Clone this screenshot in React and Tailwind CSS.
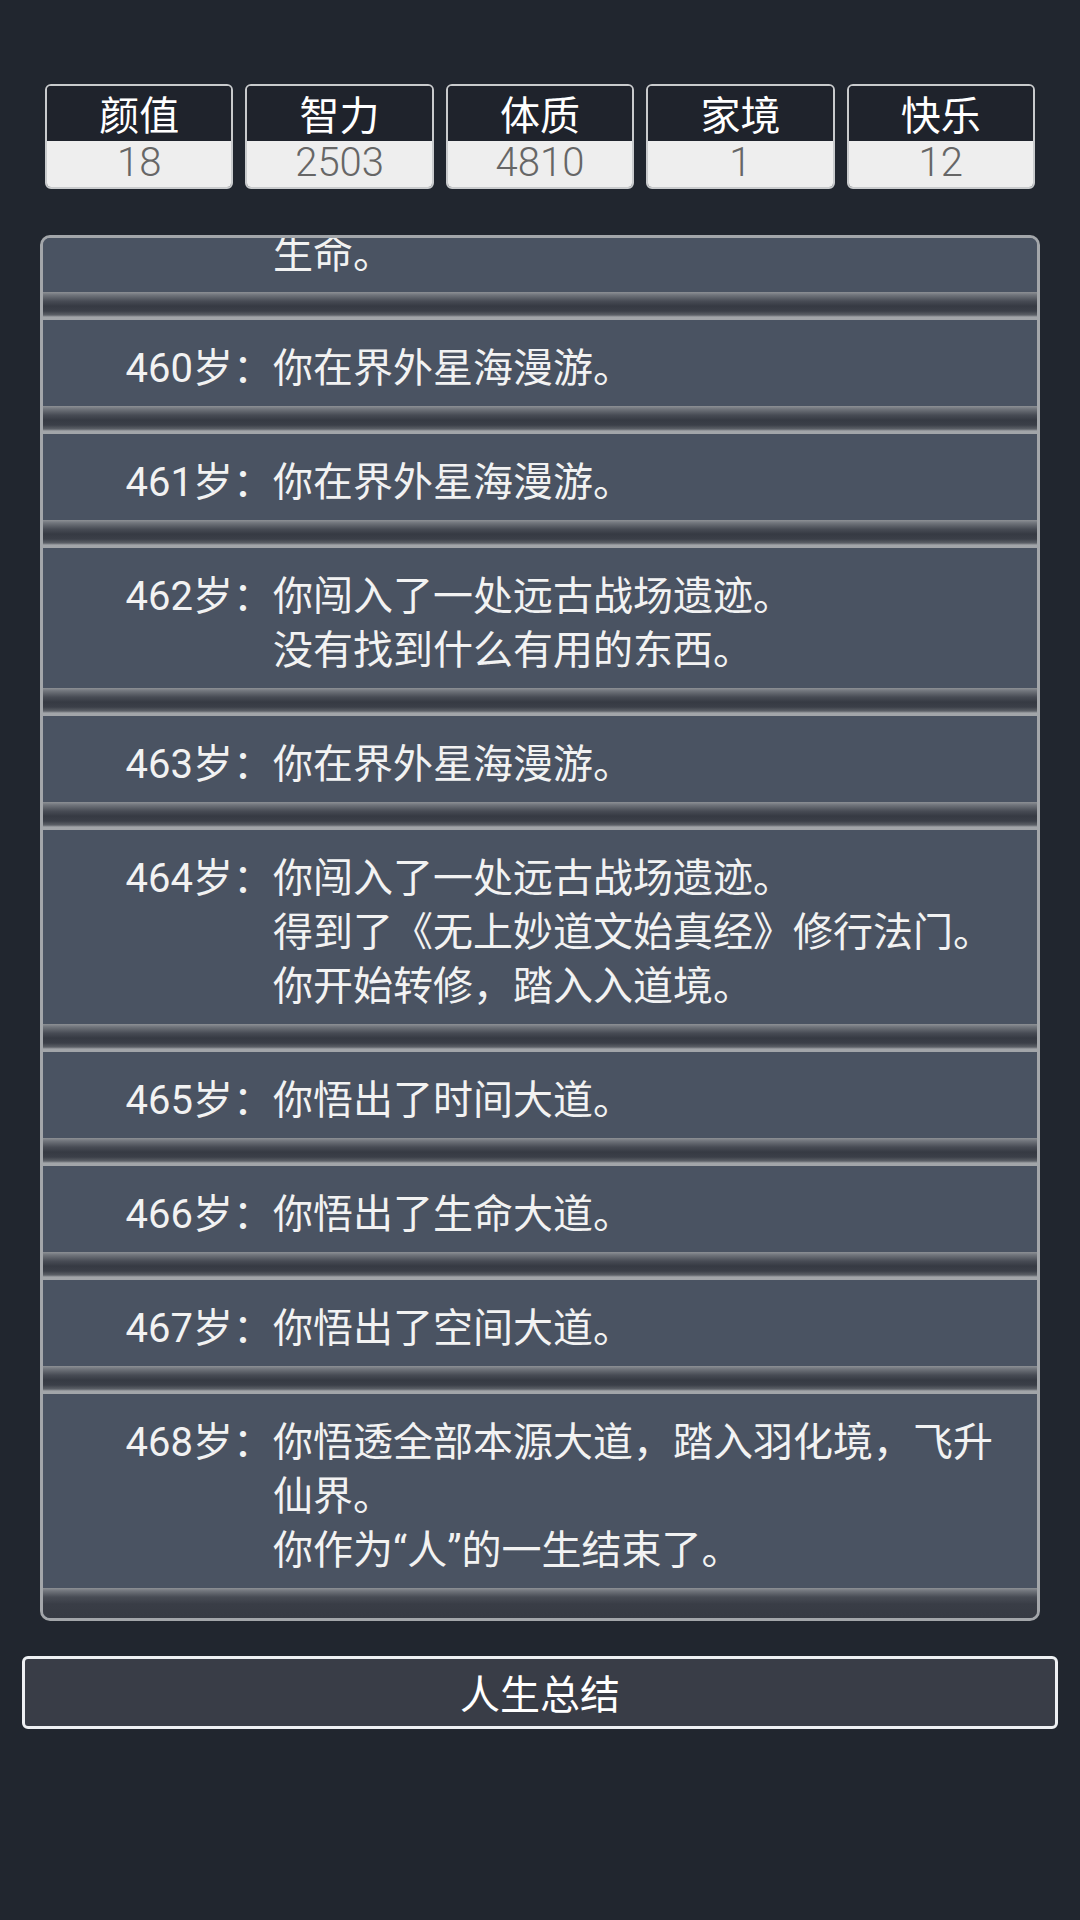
import React from 'react';

const stats = [
  { name: '颜值', value: 18 },
  { name: '智力', value: 2503 },
  { name: '体质', value: 4810 },
  { name: '家境', value: 1 },
  { name: '快乐', value: 12 },
];

// 第一条只露出最后一行，其余被面板顶部裁掉
const events = [
  { age: 459, lines: ['你在界外星海中感悟天地，领悟了', '生命。'] },
  { age: 460, lines: ['你在界外星海漫游。'] },
  { age: 461, lines: ['你在界外星海漫游。'] },
  { age: 462, lines: ['你闯入了一处远古战场遗迹。', '没有找到什么有用的东西。'] },
  { age: 463, lines: ['你在界外星海漫游。'] },
  { age: 464, lines: ['你闯入了一处远古战场遗迹。', '得到了《无上妙道文始真经》修行法门。', '你开始转修，踏入入道境。'] },
  { age: 465, lines: ['你悟出了时间大道。'] },
  { age: 466, lines: ['你悟出了生命大道。'] },
  { age: 467, lines: ['你悟出了空间大道。'] },
  { age: 468, lines: ['你悟透全部本源大道，踏入羽化境，飞升仙界。', '你作为“人”的一生结束了。'] },
];

const Separator = ({ last }) =>
  last ? (
    <div className="h-[30px] shrink-0 bg-[linear-gradient(to_bottom,#8d9095_0px,#70747b_3px,#484c55_9px,#393d46_16px,#373b44_30px)]" />
  ) : (
    <div className="h-[28px] shrink-0 bg-[linear-gradient(to_bottom,#8d9095_0px,#70747b_3px,#484c55_9px,#363a43_14px,#3b3f48_19px,#5c6067_23px,#a2a5a9_25px,#a2a5a9_28px)]" />
  );

const App = () => {
  return (
    <div
      className="w-[1080px] h-[1920px] bg-[#21262f] text-white overflow-hidden"
      style={{ fontFamily: 'Roboto, "Noto Sans CJK SC", "Noto Sans", sans-serif' }}
    >
      {/* 属性 */}
      <div className="pt-[84px] px-[45px] grid grid-cols-5 gap-[12px]">
        {stats.map((s) => (
          <div key={s.name} className="border-2 border-[#c9cbcd] rounded-[6px] overflow-hidden">
            <div className="h-[55px] pt-[6px] bg-[#1f232c] text-[40px] leading-[49px] text-center text-white">{s.name}</div>
            <div className="h-[46px] bg-[#eeeeee] text-[40px] leading-[44px] font-light text-center text-[#666666]">{s.value}</div>
          </div>
        ))}
      </div>

      {/* 人生经历 */}
      <div className="mt-[46px] mx-[40px] h-[1386px] border-[3px] border-[#a3a6aa] rounded-[10px] overflow-hidden bg-[#4a5362] flex flex-col justify-end">
        {events.map((e, i) => (
          <React.Fragment key={e.age}>
            <div className="shrink-0 flex pt-[22px] pb-[10px] bg-[#4a5362] text-[40px] leading-[54px] text-[#f2f2f2]">
              <div className="w-[230px] shrink-0 text-right">{e.age}岁：</div>
              <div className="flex-1 pr-[28px]">
                {e.lines.map((l, j) => (
                  <div key={j}>{l}</div>
                ))}
              </div>
            </div>
            <Separator last={i === events.length - 1} />
          </React.Fragment>
        ))}
      </div>

      <button className="mt-[35px] mx-[22px] w-[1036px] h-[73px] pt-[6px] border-[3px] border-[#eef0f3] rounded-[6px] bg-[#393d47] text-[40px] text-white flex items-center justify-center">
        人生总结
      </button>
    </div>
  );
};

export default App;
